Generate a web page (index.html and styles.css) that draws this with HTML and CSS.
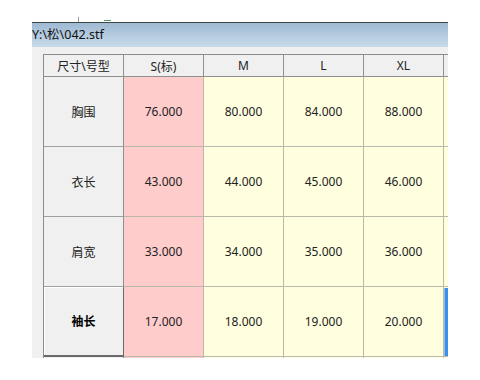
FILE: index.html
```html
<!DOCTYPE html>
<html>
<head>
<meta charset="utf-8">
<link rel="stylesheet" href="styles.css">
</head>
<body>
<div class="desk">
  <div class="window">
    <div class="titlebar">Y:\松\042.stf</div>
    <div class="content">
      <div class="grid">
        <div class="hd">尺寸\号型</div>
        <div class="hd">S(标)</div>
        <div class="hd">M</div>
        <div class="hd">L</div>
        <div class="hd">XL</div>
        <div class="hd"></div>

        <div class="lbl">胸围</div>
        <div class="cell base">76.000</div>
        <div class="cell">80.000</div>
        <div class="cell">84.000</div>
        <div class="cell">88.000</div>
        <div class="cell"></div>

        <div class="lbl">衣长</div>
        <div class="cell base">43.000</div>
        <div class="cell">44.000</div>
        <div class="cell">45.000</div>
        <div class="cell">46.000</div>
        <div class="cell"></div>

        <div class="lbl">肩宽</div>
        <div class="cell base">33.000</div>
        <div class="cell">34.000</div>
        <div class="cell">35.000</div>
        <div class="cell">36.000</div>
        <div class="cell"></div>

        <div class="lbl active">袖长</div>
        <div class="cell base">17.000</div>
        <div class="cell">18.000</div>
        <div class="cell">19.000</div>
        <div class="cell">20.000</div>
        <div class="cell sel"></div>

        <div class="lbl"></div>
        <div class="cell base"></div>
        <div class="cell"></div>
        <div class="cell"></div>
        <div class="cell"></div>
        <div class="cell"></div>
      </div>
    </div>
  </div>
  <span class="tick"></span>
  <span class="green"></span>
</div>
</body>
</html>
```

FILE: styles.css
```css
html, body {
  margin: 0;
  padding: 0;
  background: #ffffff;
  width: 480px;
  height: 380px;
  overflow: hidden;
}

.desk {
  position: relative;
  padding-top: 22px;
  padding-left: 32px;
  font-family: "Noto Sans", "Noto Sans CJK SC", sans-serif;
  font-size: 12px;
  color: #1a1a1a;
}

.window {
  width: 416px;
  height: 336px;
  overflow: hidden;
  border-top: 1px solid #3a4744;
  box-sizing: border-box;
  display: flex;
  flex-direction: column;
}

.titlebar {
  height: 24px;
  flex: none;
  background: linear-gradient(#9fbad3, #c9dbeb);
  line-height: 23px;
  font-size: 12.5px;
  color: #111;
  white-space: nowrap;
}

.content {
  flex: 1;
  background: #f0f0f0;
  padding-top: 7px;
  padding-left: 11px;
  overflow: hidden;
}

.grid {
  display: grid;
  grid-template-columns: repeat(6, 80px);
  grid-template-rows: 22px repeat(5, 70px);
  border-left: 1px solid #8c8c8c;
  border-top: 1px solid #8c8c8c;
  width: max-content;
}

.hd, .lbl, .cell {
  box-sizing: border-box;
  display: flex;
  align-items: center;
  justify-content: center;
  border-right: 1px solid #b9b9ad;
  border-bottom: 1px solid #b9b9ad;
}

.hd {
  background: #f0f0f0;
  border-right-color: #8f8f8f;
  border-bottom-color: #8f8f8f;
  color: #222;
}

.lbl {
  background: #f0f0f0;
  border-right-color: #8f8f8f;
  border-bottom-color: #a0a0a0;
  color: #222;
}

.lbl.active {
  font-weight: bold;
  color: #000;
  border-right: 1px solid #6a6a6a;
  border-bottom: 2px solid #6a6a6a;
  box-shadow: inset 1px 1px 0 #ffffff;
}

.cell {
  background: #ffffe0;
  color: #222;
}

.cell.base {
  background: #ffcccc;
  border-right-color: #c9b2ad;
}

.cell.sel {
  background: #3d8fe8;
  box-shadow: inset 0 1px 0 #ffffe0, inset 1px 0 0 #8fbcf0;
}

.tick {
  position: absolute;
  left: 78px;
  top: 17px;
  width: 1px;
  height: 5px;
  background: #9a9a9a;
}

.green {
  position: absolute;
  left: 104px;
  top: 20px;
  width: 7px;
  height: 1px;
  background: #4c9a6a;
}
```
